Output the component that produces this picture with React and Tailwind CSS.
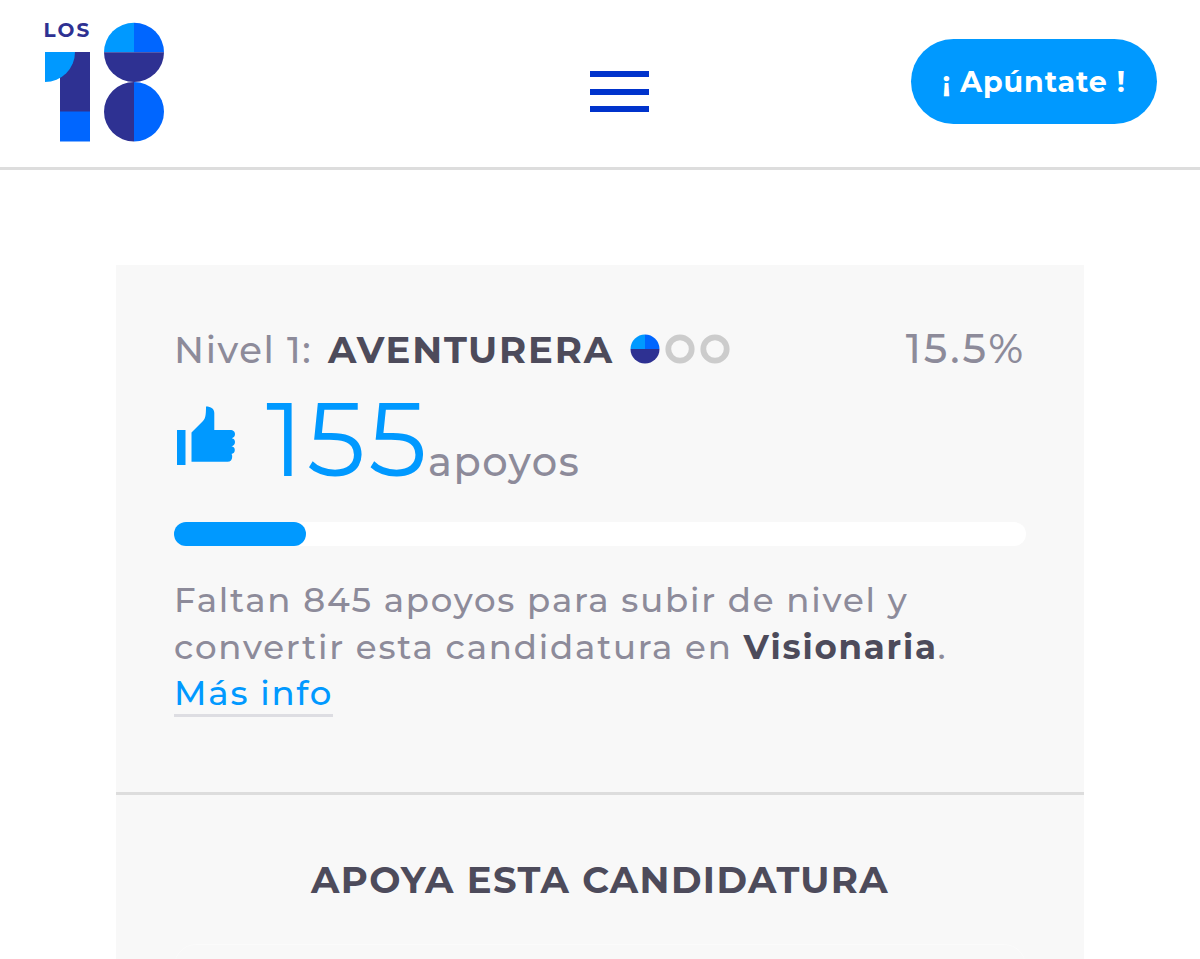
import React from 'react';

const support = {
  level: 1,
  levelName: 'AVENTURERA',
  nextLevel: 'Visionaria',
  count: 155,
  missing: 845,
  percent: 15.5,
};

const Logo = () => (
  <svg width="140" height="130" viewBox="-4 -10 140 130" className="-mt-[10px] -ml-[4px]" aria-label="Los 18">
    <text x="-0.5" y="15" fontSize="20" fontWeight="700" letterSpacing="2.2" fill="#2e3192">
      LOS
    </text>
    <path d="M16 30h30v60H16z" fill="#2e3192" />
    <path d="M16 89.5h30V119.500H16z" fill="#0066ff" />
    <path d="M1 30h30A30 30 0 0 1 1 60z" fill="#0099ff" />
    <path d="M60 30.300A30 29.600 0 0 1 90 0.700V30.300z" fill="#0099ff" />
    <path d="M90 0.700A30 29.600 0 0 1 120 30.300H90z" fill="#0066ff" />
    <path d="M60 30.300A30 29.600 0 0 0 120 30.300z" fill="#2e3192" />
    <path d="M90 59.900A30 29.800 0 0 0 90 119.500z" fill="#2e3192" />
    <path d="M90 59.900A30 29.800 0 0 1 90 119.500z" fill="#0066ff" />
  </svg>
);

const ThumbIcon = () => (
  <svg width="60" height="60" viewBox="0 0 60 60" fill="#0099ff">
    <path d="M1 24h8.500v35H1z" />
    <path d="M15.500 26.500 27 15c2.300-2.600 3-5 3-14.500 5 0 8.300 2.200 8.300 6.500v17h15.700c3.500 0 5 2 5 4 0 2.200-1.100 3.600-3.200 4.200 2.200.3 3.200 1.800 3.200 3.900 0 2.300-1.200 3.700-3.500 4.200 2.200.4 3.300 1.700 3.300 3.700 0 2.200-1.200 3.600-3.500 4.100 0.600.4.900 1 .9 2.700 0 3-1.700 5-4.700 5H15.500z" />
  </svg>
);

const LevelDots = ({ level }) => (
  <div className="flex gap-[5px]">
    {[1, 2, 3].map((n) =>
      n <= level ? (
        <svg key={n} width="30" height="30" viewBox="0 0 30 30">
          <path d="M.5 15A14.500 14.500 0 0 1 15 .5V15z" fill="#0099ff" />
          <path d="M15 .5A14.500 14.500 0 0 1 29.500 15H15z" fill="#0066ff" />
          <path d="M.5 15A14.500 14.500 0 0 0 29.500 15z" fill="#2e3192" />
        </svg>
      ) : (
        <svg key={n} width="30" height="30" viewBox="0 0 30 30">
          <circle cx="15" cy="15" r="11.700" fill="#f8f8f8" stroke="#cccccc" strokeWidth="5.800" />
        </svg>
      )
    )}
  </div>
);

const Header = () => (
  <header className="flex h-[170px] items-start justify-between border-b-[3px] border-[#dddddd] pl-[44px] pr-[43px]">
    <div className="mt-[22px] w-[284px]">
      <Logo />
    </div>
    <button aria-label="Menú" className="mt-[71px] flex w-[59px] flex-col gap-[11.5px]">
      <span className="h-[6px] bg-[#0033cc]"></span>
      <span className="h-[6px] bg-[#0033cc]"></span>
      <span className="h-[6px] bg-[#0033cc]"></span>
    </button>
    <button className="mt-[39px] flex h-[85px] w-[246px] items-center justify-center whitespace-nowrap rounded-full bg-[#0099ff] pt-[2px] text-[28.5px] font-bold tracking-[0.9px] text-white">
      ¡ Apúntate !
    </button>
  </header>
);

const App = () => {
  return (
    <div className="h-[959px] overflow-hidden bg-white font-['Montserrat','Inter',sans-serif] text-[#8d8b9a]">
      <Header />

      <main className="mx-auto mt-[95px] w-[968px] bg-[#f8f8f8]">
        <section className="h-[530px] border-b-[3px] border-[#dddddd] px-[58px] pt-[60px]">
          <div className="flex h-[50px] items-center whitespace-nowrap">
            <span className="w-[154px] text-[37px] font-medium tracking-[1.6px]">Nivel {support.level}:</span>
            <h2 className="w-[302px] text-[37px] font-bold tracking-[1.8px] text-[#4d4b5b]">{support.levelName}</h2>
            <div className="-mt-[3px]">
              <LevelDots level={support.level} />
            </div>
            <span className="-mt-[2px] ml-auto text-[41px] font-medium tracking-[2.9px]">{support.percent}%</span>
          </div>

          <div className="flex h-[120px] items-baseline whitespace-nowrap">
            <div className="w-[92px] self-start pt-[31px] pl-[2px]">
              <ThumbIcon />
            </div>
            <span className="w-[162px] text-[104px] leading-[128px] font-normal tracking-[3.2px] text-[#0099ff]">
              {support.count}
            </span>
            <span className="text-[40px] font-medium tracking-[1.5px]">apoyos</span>
          </div>

          <div className="mt-[27px] h-[24px] rounded-full bg-white">
            <div className="h-full rounded-full bg-[#0099ff]" style={{ width: `${support.percent}%` }}></div>
          </div>

          <p className="mt-[31px] whitespace-nowrap text-[34px] leading-[46.5px] font-medium tracking-[1.79px]">
            <span className="block">Faltan {support.missing} apoyos para subir de nivel y</span>
            <span className="block">
              convertir esta candidatura en{' '}
              <strong className="font-bold text-[#4d4b5b]">{support.nextLevel}</strong>.
            </span>
            <a href="#" className="inline-block h-[47px] border-b-[3px] border-[#dddde2] text-[#0099ff]">
              Más info
            </a>
          </p>
        </section>

        <section className="px-[58px] pt-[60px]">
          <h3 className="text-center text-[37px] leading-[50px] font-bold tracking-[1.4px] text-[#4d4b5b]">
            APOYA ESTA CANDIDATURA
          </h3>
          <div className="mt-[39px] h-[70px] rounded-[22px] border border-[#fbfbfb] bg-[#f8f8f8]"></div>
        </section>
      </main>
    </div>
  );
};

export default App;
